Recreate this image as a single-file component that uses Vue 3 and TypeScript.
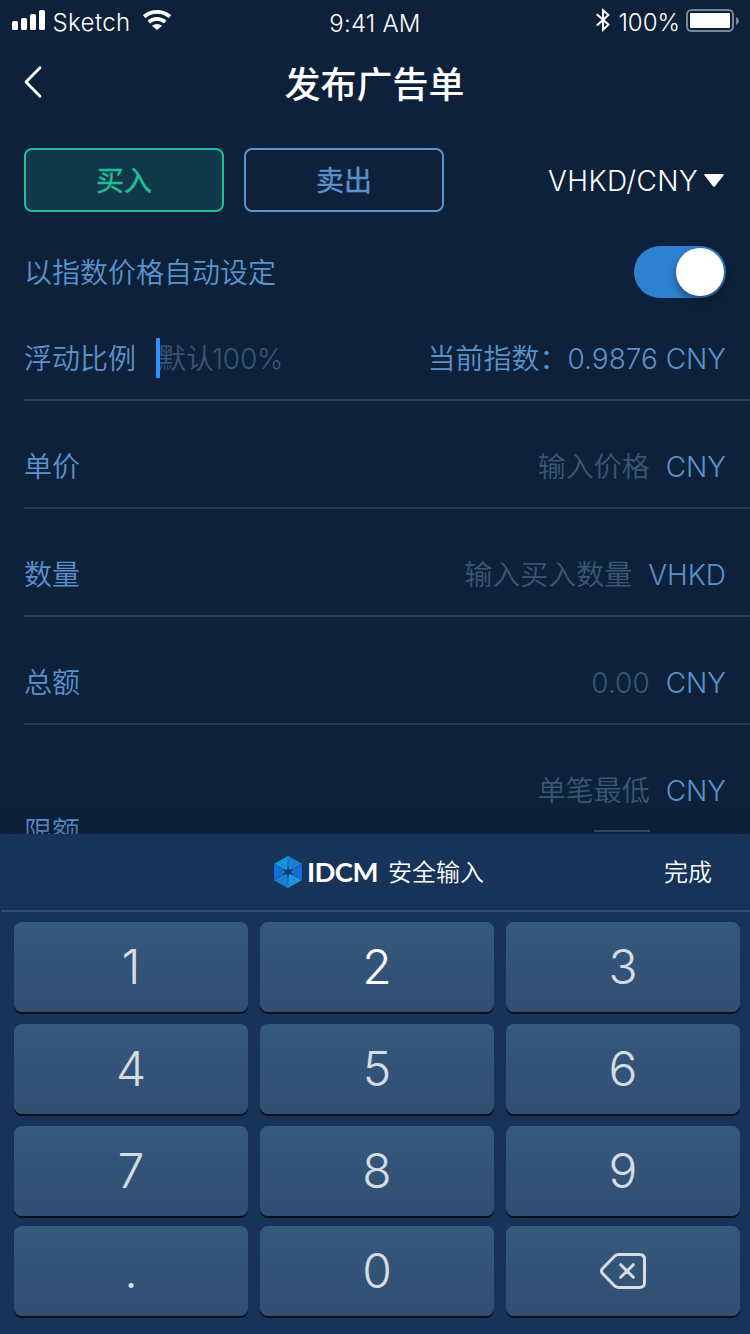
<script setup lang="ts">
import { ref } from 'vue'

interface FieldRow {
  label: string
  hint: string
  unit: string
}

const side = ref<'buy' | 'sell'>('buy')

const rows: FieldRow[] = [
  { label: '单价', hint: '输入价格', unit: 'CNY' },
  { label: '数量', hint: '输入买入数量', unit: 'VHKD' },
  { label: '总额', hint: '0.00', unit: 'CNY' },
]

const keys: string[] = ['1', '2', '3', '4', '5', '6', '7', '8', '9', '.', '0', 'del']
</script>

<template>
  <div class="screen">
    <header class="status">
      <div class="status-left">
        <svg class="signal" width="34" height="20" viewBox="0 0 34 20" fill="#fff">
          <rect x="0" y="11" width="6" height="9" rx="1.6" />
          <rect x="9" y="8" width="6" height="12" rx="1.6" />
          <rect x="18" y="4" width="6" height="16" rx="1.6" />
          <rect x="27" y="0" width="6" height="20" rx="1.6" />
        </svg>
        <span class="carrier">Sketch</span>
        <svg class="wifi" width="28" height="20" viewBox="0 0 28 20">
          <g fill="none" stroke="#fff" stroke-width="3.8">
            <path d="M1.1 6.6Q7 1.9 14 1.9T26.9 6.6" />
            <path d="M5.8 12Q9.4 8.9 14 8.9T22.2 12" />
          </g>
          <path d="M14 19.9L8.9 15.7Q14 12.2 19.1 15.7Z" fill="#fff" />
        </svg>
      </div>
      <span class="clock">9:41 AM</span>
      <div class="status-right">
        <svg class="bt" width="14" height="24" viewBox="0 0 14 24" fill="none" stroke="#fff" stroke-width="2">
          <path d="M.8 6.2L12.4 16.6L7 21.8V2.2L12.4 7L.8 17.6" />
        </svg>
        <span class="percent">100%</span>
        <svg class="battery" width="53" height="24" viewBox="0 0 53 24">
          <rect x="1" y="1" width="46" height="21" rx="4.5" fill="none" stroke="#7b8796" stroke-width="2" />
          <rect x="4" y="4" width="40" height="15" rx="1" fill="#fff" />
          <path d="M50 8Q53 9.3 53 12T50 16Z" fill="#7b8796" />
        </svg>
      </div>
    </header>

    <nav class="nav">
      <svg class="back" width="20" height="34" viewBox="0 0 20 34" fill="none" stroke="#fff" stroke-width="2.8" stroke-linecap="round" stroke-linejoin="round">
        <path d="M16 2.7L2 17L16 31.3" />
      </svg>
      <h1>发布广告单</h1>
    </nav>

    <section class="sides">
      <button class="side" :class="{ active: side === 'buy' }" @click="side = 'buy'">买入</button>
      <button class="side" :class="{ active: side === 'sell' }" @click="side = 'sell'">卖出</button>
      <div class="pair">
        <span class="pair-name">VHKD/CNY</span>
        <svg width="20" height="13" viewBox="0 0 20 13"><path d="M1 0H19Q20.3 .2 19.4 1.4L11 12.2Q10 13.2 9 12.2L.6 1.4Q-.3 .2 1 0Z" fill="#fff" /></svg>
      </div>
    </section>

    <section class="auto">
      <span class="auto-label">以指数价格自动设定</span>
      <div class="switch"><i class="knob"></i></div>
    </section>

    <section class="row first">
      <span class="label">浮动比例</span>
      <i class="caret"></i>
      <span class="hint ratio">默认<span class="hundred">100%</span></span>
      <span class="index">当前指数：</span>
      <span class="unit rate">0.9876 CNY</span>
    </section>
    <section v-for="r in rows" :key="r.label" class="row">
      <span class="label">{{ r.label }}</span>
      <span class="hint push">{{ r.hint }}</span>
      <span class="unit">{{ r.unit }}</span>
    </section>
    <section class="limits">
      <span class="label limit-label">限额</span>
      <div class="limit-side">
        <div class="limit-line">
          <span class="hint">单笔最低</span>
          <span class="unit">CNY</span>
        </div>
        <i class="dash"></i>
      </div>
    </section>

    <section class="keyboard">
      <div class="bar">
        <div class="brand">
          <svg width="28" height="32" viewBox="0 0 28 32">
            <path d="M14 0L28 8L14 16L0 8Z" fill="#1695df" />
            <path d="M0 8L14 16L0 24Z" fill="#126fda" />
            <path d="M28 8V24L14 16Z" fill="#126fda" />
            <path d="M0 24L14 16L28 24L14 32Z" fill="#1b97e2" />
            <path d="M14 0L28 8L14 16Z" fill="#1a80d4" />
            <path d="M0 24L14 16V32Z" fill="#1a80d4" />
            <path d="M14 2V30M1 8.5L27 23.5M27 8.5L1 23.5" stroke="#125bae" stroke-width=".9" />
            <path d="M14 10L15 14L19.5 13L16.4 16L19.5 19L15 18L14 22L13 18L8.5 19L11.6 16L8.5 13L13 14Z" fill="#163560" />
          </svg>
          <span class="logo">IDCM</span>
          <span class="secure">安全输入</span>
        </div>
        <span class="done">完成</span>
      </div>
      <div class="keys">
        <button v-for="k in keys" :key="k" class="key" :class="{ lit: k === '2' }">
          <svg v-if="k === 'del'" width="46" height="36" viewBox="0 0 46 36" fill="none" stroke="#d6dce4" stroke-width="3" stroke-linecap="round" stroke-linejoin="round">
            <path d="M18.5 1.5H39.5Q44.5 1.5 44.5 6.5V29.5Q44.5 34.5 39.5 34.5H18.5Q16.5 34.5 15 33.2L2.6 20.5Q.4 18 2.6 15.5L15 2.8Q16.5 1.5 18.5 1.5Z" />
            <path d="M20.7 11.7L33.3 24.3M33.3 11.7L20.7 24.3" />
          </svg>
          <span v-else>{{ k }}</span>
        </button>
      </div>
    </section>
  </div>
</template>

<style>
body {
  background: #0d213b;
}
</style>

<style scoped>
.screen {
  position: relative;
  box-sizing: border-box;
  width: 750px;
  height: 1334px;
  overflow: hidden;
  background: #0d213b;
  color: #5b92cb;
  font: 350 28px/40px Inter, "Noto Sans CJK SC", sans-serif;
  white-space: nowrap;
}
svg {
  display: block;
  flex: none;
}
.status {
  display: grid;
  grid-template-columns: 1fr auto 1fr;
  height: 40px;
  color: #fff;
  font-size: 24px;
}
.status-left,
.status-right {
  display: flex;
  align-items: flex-start;
}
.status-left {
  padding-left: 12px;
}
.signal {
  margin-top: 10px;
}
.carrier {
  margin: 3px 0 0 6.5px;
  width: 77.5px;
  letter-spacing: 0.4px;
}
.wifi {
  margin: 10px 0 0 13px;
}
.clock {
  padding-top: 4px;
  letter-spacing: 0.2px;
}
.status-right {
  justify-content: flex-end;
  padding-right: 11px;
}
.bt {
  margin-top: 8px;
}
.percent {
  margin: 3px 6px 0 8px;
}
.battery {
  margin-top: 9px;
}
.nav {
  display: grid;
  grid-template-columns: 100px 1fr 100px;
  align-items: center;
  height: 88px;
}
.back {
  margin-left: 24px;
  margin-top: -4px;
}
h1 {
  margin: 2px 0 0 -1px;
  color: #fff;
  font-size: 36px;
  font-weight: 500;
  text-align: center;
}
.sides {
  display: flex;
  align-items: center;
  gap: 20px;
  margin-top: 20px;
  padding: 0 26px 0 24px;
  height: 64px;
}
.side {
  box-sizing: border-box;
  width: 200px;
  height: 64px;
  padding: 2px 0 0;
  border: 2px solid #5b92cb;
  border-radius: 8px;
  background: transparent;
  color: #5b92cb;
  font: 400 28px/40px Inter, "Noto Sans CJK SC", sans-serif;
  -webkit-text-stroke: 0.4px currentColor;
}
.side.active {
  border-color: #1dbf94;
  background: #103849;
  color: #1dbf94;
}
.pair {
  display: flex;
  align-items: center;
  gap: 6px;
  margin-left: auto;
  color: #fff;
}
.pair-name {
  padding-top: 2px;
  font-weight: 300;
  letter-spacing: 0.4px;
}
.auto {
  display: flex;
  align-items: center;
  justify-content: space-between;
  height: 52px;
  margin-top: 34px;
  padding: 0 24px;
}
.auto-label {
  padding-top: 2px;
}
.switch {
  display: flex;
  justify-content: flex-end;
  box-sizing: border-box;
  width: 92px;
  height: 52px;
  padding: 2px;
  border-radius: 26px;
  background: #2e80d2;
}
.knob {
  width: 48px;
  height: 48px;
  border-radius: 50%;
  background: #fff;
  box-shadow: 0 4px 8px rgba(0, 0, 0, 0.4);
}
.row {
  display: flex;
  box-sizing: border-box;
  height: 108px;
  margin-left: 24px;
  padding: 46px 24px 0 0;
  border-bottom: 2px solid #263e59;
}
.row.first {
  height: 103px;
  padding-top: 41px;
}
.caret {
  z-index: 1;
  width: 4px;
  height: 40px;
  margin: -1px 0 0 20px;
  border-radius: 1px;
  background: #2a91ff;
}
.hint {
  color: #3a5673;
}
.ratio {
  margin-left: -2px;
}
.hundred {
  font-weight: 300;
  letter-spacing: -0.2px;
  margin-left: -2px;
}
.index {
  margin-left: auto;
}
.push {
  margin-left: auto;
}
.unit {
  margin-left: 16px;
  font-weight: 300;
}
.unit.rate {
  margin-left: 0;
}
.limits {
  display: flex;
  justify-content: space-between;
  margin-left: 24px;
  padding: 46px 24px 0 0;
}
.limit-label {
  margin-top: 41px;
}
.limit-side {
  width: 188px;
}
.limit-line {
  display: flex;
  justify-content: flex-end;
}
.dash {
  display: block;
  width: 56px;
  height: 2px;
  margin: 19px 0 0 56px;
  background: #34506e;
}
.keyboard {
  position: absolute;
  inset: 834px 0 0 0;
  background: #173359;
  box-shadow: 0 -2px 18px rgba(15, 26, 42, 0.4);
}
.bar {
  display: grid;
  grid-template-columns: 273px 1fr auto;
  align-items: center;
  box-sizing: border-box;
  height: 78px;
  margin-left: 1px;
  padding-right: 38px;
  border-bottom: 2px solid #324e70;
  color: #fff;
  font-size: 24px;
}
.brand {
  grid-column: 2;
  display: flex;
  align-items: center;
}
.logo {
  width: 70px;
  margin-left: 5px;
  font-family: Lato, sans-serif;
  font-size: 27.5px;
  font-weight: 700;
  letter-spacing: -0.6px;
}
.secure {
  margin-left: 11px;
}
.secure,
.done {
  padding-top: 2px;
}
.keys {
  display: grid;
  grid-template-columns: repeat(3, 234px);
  grid-template-rows: 90px 90px 90px 88px;
  gap: 12px;
  padding: 10px 0 0 14px;
}
.key {
  display: flex;
  align-items: center;
  justify-content: center;
  height: 90px;
  padding: 0;
  border: 0;
  border-radius: 8px;
  background: linear-gradient(#36597f, #304e71);
  box-shadow: 0 2px 0 #0b0e13;
  color: #d6dce4;
  font: 350 48px/60px Inter, sans-serif;
}
.key:nth-child(n + 10) {
  margin-top: -2px;
}
.key.lit {
  color: #fff;
}
</style>
